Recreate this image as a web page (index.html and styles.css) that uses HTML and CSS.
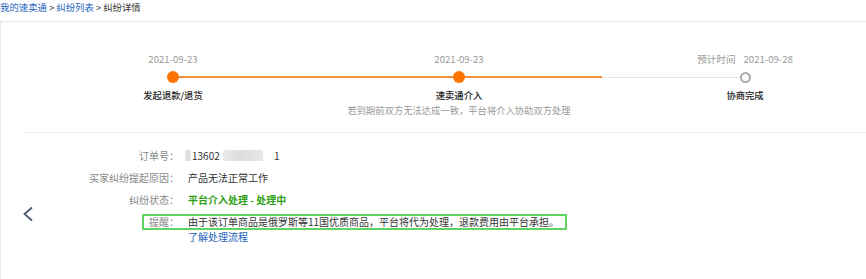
FILE: index.html
```html
<!DOCTYPE html>
<html lang="zh-CN">
<head>
  <meta charset="UTF-8" />
  <title>纠纷详情</title>
  <link rel="stylesheet" href="styles.css">
</head>
<body>

  <div class="crumbs">
    <a href="#">我的速卖通</a> &gt; <a href="#">纠纷列表</a> &gt; 纠纷详情
  </div>

  <div class="panel">
    <div class="steps">
      <div class="step first">
        <div class="step-date">2021-09-23</div>
        <div class="step-track"><span class="dot"></span></div>
        <div class="step-title">发起退款/退货</div>
      </div>
      <div class="step">
        <div class="step-date">2021-09-23</div>
        <div class="step-track"><span class="dot"></span></div>
        <div class="step-title">速卖通介入</div>
        <div class="step-note">若到期前双方无法达成一致，平台将介入协助双方处理</div>
      </div>
      <div class="step last pending">
        <div class="step-date"><span class="eta">预计时间</span>2021-09-28</div>
        <div class="step-track"><span class="dot"></span></div>
        <div class="step-title">协商完成</div>
      </div>
    </div>

    <div class="divider"></div>

    <div class="detail">
      <a class="prev" href="#">
        <svg width="12" height="16" viewBox="0 0 12 16"><polyline points="10,1.5 2.5,8 10,14.5" fill="none" stroke="#4b5a6e" stroke-width="1.8"/></svg>
      </a>
      <div class="info">
        <div class="row">
          <span class="label">订单号：</span>
          <span class="value"><span class="blur b1"></span>13602<span class="blur b2"></span> 1</span>
        </div>
        <div class="row">
          <span class="label">买家纠纷提起原因：</span>
          <span class="value">产品无法正常工作</span>
        </div>
        <div class="row">
          <span class="label">纠纷状态：</span>
          <span class="value status">平台介入处理 - 处理中</span>
        </div>
        <div class="row notice">
          <span class="label">提醒：</span>
          <span class="value">由于该订单商品是俄罗斯等11国优质商品，平台将代为处理，退款费用由平台承担。</span>
        </div>
        <a class="more" href="#">了解处理流程</a>
      </div>
    </div>
  </div>

</body>
</html>
```

FILE: styles.css
```css
:root {
  --blue: #1d63be;
  --orange: #ff7400;
  --line: #f0903c;
  --muted: #9a9a9a;
  --text: #333;
  --border: #e8e8e8;
}
body {
  margin: 0;
  font-family: "Noto Sans CJK SC", "Noto Sans", sans-serif;
  color: var(--text);
  background: #fff;
  overflow: hidden;
}
a {
  color: var(--blue);
  text-decoration: none;
}
.crumbs {
  font-size: 9.4px;
  line-height: 14px;
  margin-bottom: 7px;
  color: #333;
}
.panel {
  border-top: 1px solid var(--border);
  border-left: 1px solid var(--border);
  min-height: 260px;
}

/* timeline */
.steps {
  display: flex;
  padding: 30px 0 0 29px;
}
.step {
  width: 286px;
  flex-shrink: 0;
  display: flex;
  flex-direction: column;
  align-items: center;
  font-size: 9.3px;
  line-height: 14px;
}
.step-date {
  color: var(--muted);
  font-size: 9.6px;
}
.eta {
  margin-right: 8px;
}
.step-track {
  position: relative;
  width: 100%;
  height: 12px;
  margin: 5px 0;
  display: flex;
  justify-content: center;
}
.step-track::before,
.step-track::after {
  content: '';
  position: absolute;
  top: 5px;
  width: 50%;
  height: 2px;
  background: var(--line);
}
.step-track::before { left: 0; }
.step-track::after { right: 0; }
.step.first .step-track::before,
.step.last .step-track::after {
  display: none;
}
.step.pending .step-track::before {
  background: none;
  height: 0;
  top: 6px;
  border-top: 1px dotted #c8c8c8;
}
.dot {
  position: relative;
  z-index: 1;
  width: 12px;
  height: 12px;
  border-radius: 50%;
  background: var(--orange);
}
.step.pending .dot {
  box-sizing: border-box;
  width: 11px;
  height: 11px;
  margin-top: 0.5px;
  background: #fff;
  border: 2px solid #aaa;
}
.step-title {
  color: #222;
  font-weight: 500;
}
.step-note {
  color: var(--muted);
  white-space: nowrap;
  margin-top: 1px;
}

.divider {
  margin: 15px 0 12px 22px;
  border-top: 1px solid #efefef;
}

/* details */
.detail {
  display: flex;
  align-items: flex-start;
}
.prev {
  display: block;
  margin: 61px 0 0 21px;
  width: 12px;
  height: 16px;
}
.prev svg {
  display: block;
}
.info {
  display: flex;
  flex-direction: column;
  align-items: flex-start;
  font-size: 10px;
}
.row {
  display: flex;
  line-height: 22px;
}
.label {
  width: 145px;
  text-align: right;
  color: #888;
  flex-shrink: 0;
}
.value {
  margin-left: 9px;
  color: #333;
  white-space: nowrap;
}
.status {
  color: #2f9f17;
  font-weight: bold;
}
.blur {
  display: inline-block;
  height: 11px;
  vertical-align: -1px;
  background: linear-gradient(90deg, #ececec, #dcdcdc 40%, #e8e8e8);
  filter: blur(0.6px);
}
.blur.b1 {
  width: 6px;
  margin-left: -3px;
  margin-right: 1px;
}
.blur.b2 {
  width: 40px;
  margin-left: 3px;
  margin-right: 9px;
}
.row.notice {
  margin: 3px 0 0 108px;
  border: 2px solid #5fd35f;
  line-height: 12px;
  padding: 0 6px 0 5px;
}
.row.notice .label {
  width: 30px;
}
.more {
  margin-left: 154px;
  line-height: 14px;
  font-size: 10px;
}
```
